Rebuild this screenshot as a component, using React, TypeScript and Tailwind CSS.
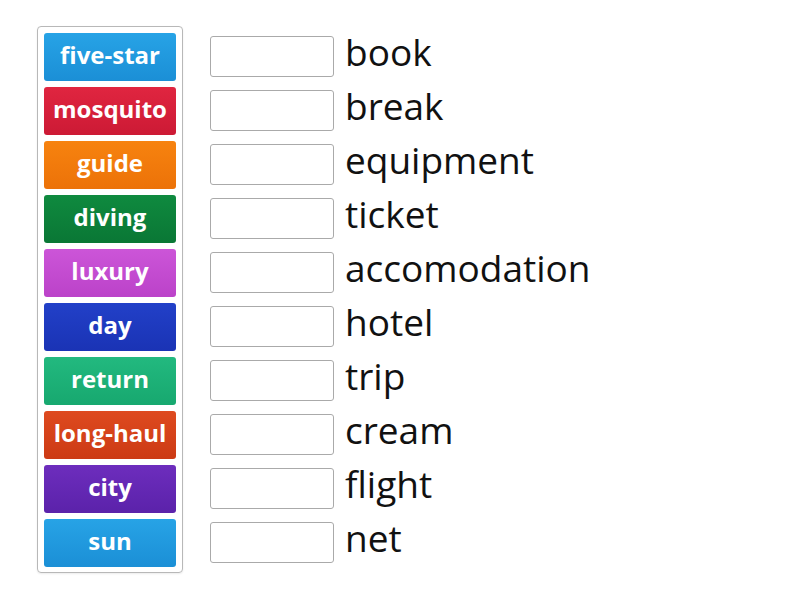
import React from 'react';

const tiles: { label: string; cls: string }[] = [
  { label: 'five-star', cls: 'bg-gradient-to-b from-[#27a3e6] to-[#1b8fd6]' },
  { label: 'mosquito', cls: 'bg-gradient-to-b from-[#e02540] to-[#cc1a35]' },
  { label: 'guide', cls: 'bg-gradient-to-b from-[#f7830f] to-[#ec7208]' },
  { label: 'diving', cls: 'bg-gradient-to-b from-[#0f8a3f] to-[#0a7735]' },
  { label: 'luxury', cls: 'bg-gradient-to-b from-[#cc55d8] to-[#bb42c9]' },
  { label: 'day', cls: 'bg-gradient-to-b from-[#2240c8] to-[#1a33b5]' },
  { label: 'return', cls: 'bg-gradient-to-b from-[#22b97f] to-[#17a86f]' },
  { label: 'long-haul', cls: 'bg-gradient-to-b from-[#de4a1f] to-[#cc3a14]' },
  { label: 'city', cls: 'bg-gradient-to-b from-[#6d2dbd] to-[#5b22aa]' },
  { label: 'sun', cls: 'bg-gradient-to-b from-[#27a3e6] to-[#1b8fd6]' },
];

const words = ['book', 'break', 'equipment', 'ticket', 'accomodation', 'hotel', 'trip', 'cream', 'flight', 'net'];

export default function App() {
  return (
    <div className="w-[800px] h-[600px] bg-white font-['Open_Sans',sans-serif] flex items-start pt-[26px] pl-[37px]">
      {/* Tile column */}
      <div className="w-[146px] border border-[#b8b8b8] rounded-[4px] px-[6px] pt-[6px] pb-[5px] flex flex-col gap-[6px] shadow-[0_1px_2px_rgba(0,0,0,0.08)]">
        {tiles.map((t) => (
          <div
            key={t.label}
            className={`h-[48px] rounded-[3px] flex items-center justify-center text-white font-bold text-[24px] leading-none pb-[4px] ${t.cls}`}
          >
            {t.label}
          </div>
        ))}
      </div>

      {/* Answer rows */}
      <div className="ml-[27px] pt-[4px] flex flex-col">
        {words.map((w) => (
          <div key={w} className="h-[54px] flex items-start">
            <div className="w-[124px] h-[41px] border border-[#aaaaaa] rounded-[3px] bg-white mt-[6px]" />
            <span className="ml-[11px] text-[37px] leading-[46px] text-[#111] mt-[-1px]">{w}</span>
          </div>
        ))}
      </div>
    </div>
  );
}
